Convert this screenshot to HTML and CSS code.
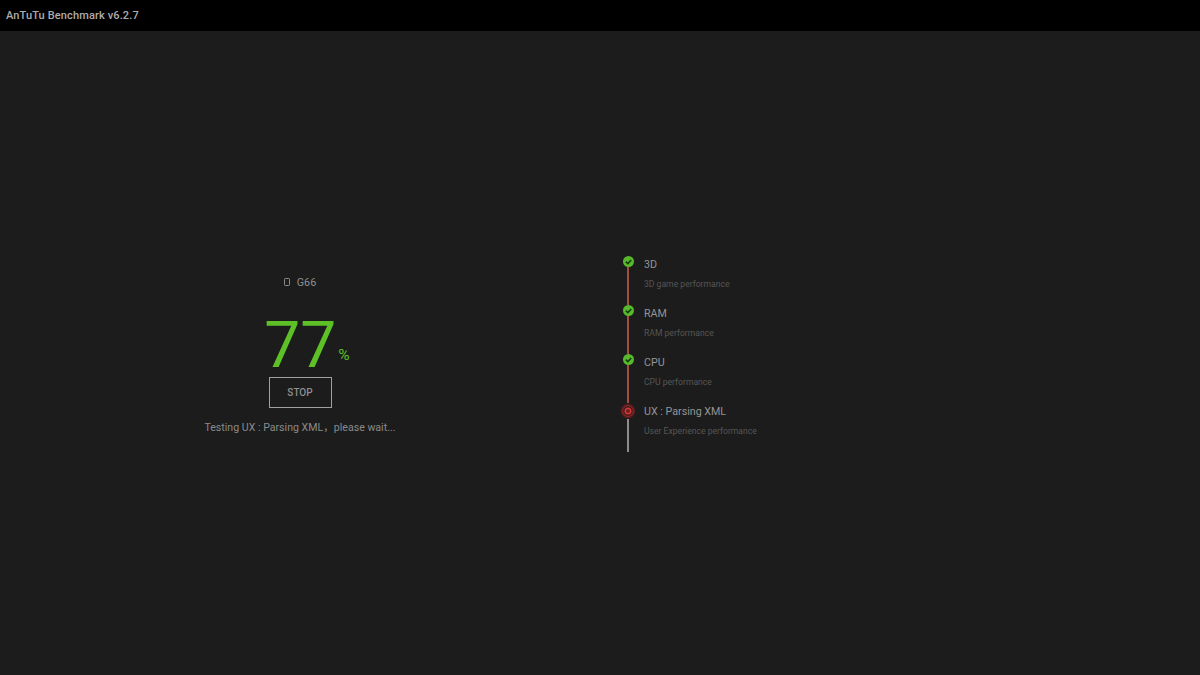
FILE: index.html
```html
<!DOCTYPE html>
<html lang="en">
<head>
<meta charset="utf-8">
<title>AnTuTu Benchmark v6.2.7</title>
<link rel="stylesheet" href="styles.css">
</head>
<body>
<header class="topbar">AnTuTu Benchmark v6.2.7</header>
<main class="content">
  <section class="progress">
    <div class="device">
      <svg class="phone" width="6" height="8" viewBox="0 0 6 8" aria-hidden="true"><rect x="0.5" y="0.5" width="5" height="7" rx="0.8" fill="none" stroke="#8a8a8a" stroke-width="1"/></svg>
      <span>G66</span>
    </div>
    <div class="score"><span class="value">77</span><span class="unit">%</span></div>
    <div class="stop">STOP</div>
    <p class="status">Testing UX : Parsing XML，please wait...</p>
  </section>
  <section class="timeline">
    <div class="step">
      <div class="rail">
        <svg class="mark" width="11" height="11" viewBox="0 0 10 10" aria-hidden="true"><circle cx="5" cy="5" r="5" fill="#58b92c"/><path d="M2.6 5.1 4.4 6.9 7.5 3.6" fill="none" stroke="#123d0a" stroke-width="1.4"/></svg>
        <div class="line done"></div>
      </div>
      <div class="text"><div class="title">3D</div><div class="sub">3D game performance</div></div>
    </div>
    <div class="step">
      <div class="rail">
        <svg class="mark" width="11" height="11" viewBox="0 0 10 10" aria-hidden="true"><circle cx="5" cy="5" r="5" fill="#58b92c"/><path d="M2.6 5.1 4.4 6.9 7.5 3.6" fill="none" stroke="#123d0a" stroke-width="1.4"/></svg>
        <div class="line done"></div>
      </div>
      <div class="text"><div class="title">RAM</div><div class="sub">RAM performance</div></div>
    </div>
    <div class="step">
      <div class="rail">
        <svg class="mark" width="11" height="11" viewBox="0 0 10 10" aria-hidden="true"><circle cx="5" cy="5" r="5" fill="#58b92c"/><path d="M2.6 5.1 4.4 6.9 7.5 3.6" fill="none" stroke="#123d0a" stroke-width="1.4"/></svg>
        <div class="line done"></div>
      </div>
      <div class="text"><div class="title">CPU</div><div class="sub">CPU performance</div></div>
    </div>
    <div class="step current">
      <div class="rail">
        <svg class="mark" width="16" height="16" viewBox="0 0 16 16" aria-hidden="true"><circle cx="8" cy="8" r="7.5" fill="#4a1c1d"/><circle cx="8" cy="8" r="5.4" fill="#3a1718" stroke="#a02a2c" stroke-width="1"/><circle cx="8" cy="8" r="2.8" fill="#6e2020" stroke="#d4373a" stroke-width="1.5"/></svg>
        <div class="line"></div>
      </div>
      <div class="text"><div class="title">UX : Parsing XML</div><div class="sub">User Experience performance</div></div>
    </div>
  </section>
</main>
</body>
</html>
```

FILE: styles.css
```css
* { box-sizing: border-box; }
html, body { margin: 0; height: 100%; }
body {
  width: 1200px;
  height: 675px;
  overflow: hidden;
  display: flex;
  flex-direction: column;
  background: #1c1c1c;
  color: #a0a0a0;
  font-family: Roboto, "Noto Sans CJK SC", "Liberation Sans", sans-serif;
}
.topbar {
  flex: 0 0 31px;
  background: #000;
  color: #adadad;
  font-size: 11px;
  font-weight: 500;
  line-height: 31px;
  padding-left: 6px;
  letter-spacing: 0.13px;
}
.content {
  flex: 1;
  display: flex;
  align-items: flex-start;
  padding-top: 225px;
}
.progress {
  flex: 0 0 600px;
  display: flex;
  flex-direction: column;
  align-items: center;
  padding-top: 19px;
}
.device {
  display: flex;
  align-items: center;
  gap: 7px;
  height: 14px;
  font-size: 10.8px;
  color: #8f8f8f;
}
.score {
  display: flex;
  align-items: flex-end;
  height: 60px;
  margin-top: 25px;
  padding-left: 14px;
  color: #5cc026;
}
.value {
  font-size: 64px;
  font-weight: 400;
  line-height: 60px;
  margin-bottom: -2px;
}
.unit {
  font-size: 15.5px;
  line-height: 16px;
  margin: 0 0 11px 2px;
}
.stop {
  width: 63px;
  height: 31px;
  margin-top: 3px;
  border: 1px solid #a0a0a0;
  font-size: 10px;
  font-weight: 500;
  line-height: 29px;
  text-align: center;
  color: #8f8f8f;
}
.status {
  margin: 13px 0 0;
  font-size: 10.6px;
  line-height: 14px;
  color: #8a8a8a;
}
.timeline {
  margin-left: 20px;
  display: flex;
  flex-direction: column;
}
.step {
  display: flex;
  height: 49px;
}
.rail {
  width: 16px;
  display: flex;
  flex-direction: column;
  align-items: center;
}
.mark { flex: none; }
.line {
  flex: 1;
  width: 1.5px;
  background: #8c8c8c;
}
.line.done { background: #a0503f; }
.text {
  margin-left: 8px;
  padding-top: 2px;
}
.title {
  font-size: 10.7px;
  line-height: 14px;
  color: #949494;
}
.sub {
  margin-top: 6px;
  font-size: 8.6px;
  line-height: 12px;
  color: #565656;
}
```
